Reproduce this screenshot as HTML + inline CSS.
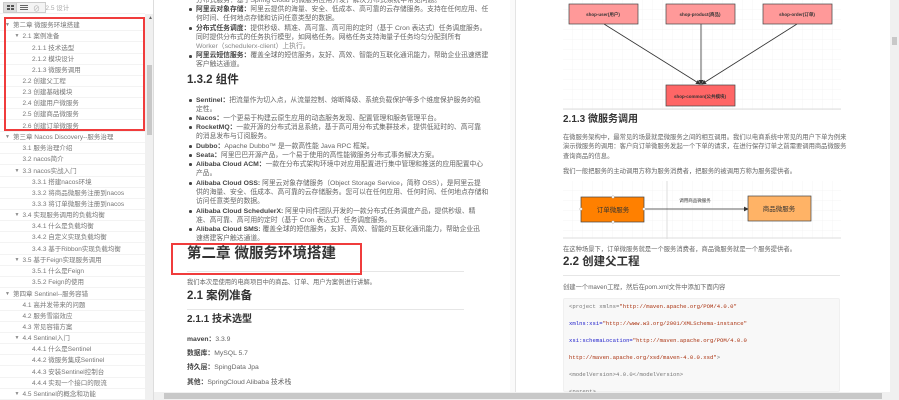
<!DOCTYPE html>
<html><head><meta charset="utf-8"><style>
*{margin:0;padding:0;box-sizing:border-box}
body{width:899px;height:400px;overflow:hidden;background:#fff;font-family:"Liberation Sans","Noto Sans CJK SC",sans-serif;color:#333;position:relative}
.a{position:absolute;white-space:nowrap}
#side{position:absolute;left:0;top:0;width:154px;height:400px;background:#fff;border-right:1px solid #ddd;overflow:hidden}
.si{position:absolute;left:0;width:145px;height:11px;font-size:6.5px;line-height:11px;color:#777;border-bottom:1px solid #f3f3f3;white-space:nowrap}
.t{font-size:5px;color:#888;position:absolute}
.doc{font-size:6.8px;line-height:9px;color:#666}
.b{position:absolute;width:2.5px;height:2.5px;background:#444;border-radius:50%}
h{font-weight:bold;color:#444}
.code{font-family:"Liberation Mono",monospace;font-size:5.6px}
</style></head><body>
<div id="side">
<div class="si" style="top:3px;padding-left:40px;color:#aaa">1.2.5 设计</div>
<div class="a" style="left:3px;top:2px;width:43px;height:11px;border:1px solid #ccc;background:#f4f4f4"></div>
<div class="a" style="left:4px;top:3px;width:13px;height:9px;background:#ddd;border-right:1px solid #ccc"></div>
<div class="a" style="left:7px;top:5px;width:3px;height:2px;background:#555;box-shadow:4px 0 #555,0 3px #555,4px 3px #555"></div>
<div class="a" style="left:20px;top:5px;width:8px;height:1px;background:#666;box-shadow:0 2px #666,0 4px #666"></div>
<div class="a" style="left:33px;top:4px;font-size:7px;color:#aaa">⊘</div>
<div id="rows"></div>
<div class="a" style="left:145px;top:14px;width:9px;height:386px;background:#f0f0f0"></div>
<div class="a" style="left:147px;top:65px;width:5px;height:70px;background:#c8c8c8"></div>
<div class="a" style="left:148px;top:15px;font-size:5px;color:#666">▲</div>
<div class="a" style="left:4px;top:17px;width:141px;height:114px;border:2px solid #f03c3c"></div>
</div>
<script>
var R=[[25,0,"第二章 微服务环境搭建",1],[36,1,"2.1 案例准备",1],[48,2,"2.1.1 技术选型"],[59,2,"2.1.2 模块设计"],[70,2,"2.1.3 微服务调用"],[81,1,"2.2 创建父工程"],[92,1,"2.3 创建基础模块"],[103,1,"2.4 创建用户微服务"],[114,1,"2.5 创建商品微服务"],[126,1,"2.6 创建订单微服务"],[137,0,"第三章 Nacos Discovery--服务治理",1],[148,1,"3.1 服务治理介绍"],[159,1,"3.2 nacos简介"],[171,1,"3.3 nacos实战入门",1],[182,2,"3.3.1 搭建nacos环境"],[193,2,"3.3.2 将商品微服务注册到nacos"],[204,2,"3.3.3 将订单微服务注册到nacos"],[215,1,"3.4 实现服务调用的负载均衡",1],[226,2,"3.4.1 什么是负载均衡"],[237,2,"3.4.2 自定义实现负载均衡"],[249,2,"3.4.3 基于Ribbon实现负载均衡"],[260,1,"3.5 基于Feign实现服务调用",1],[271,2,"3.5.1 什么是Feign"],[282,2,"3.5.2 Feign的使用"],[294,0,"第四章 Sentinel--服务容错",1],[305,1,"4.1 高并发带来的问题"],[316,1,"4.2 服务雪崩效应"],[327,1,"4.3 常见容错方案"],[338,1,"4.4 Sentinel入门",1],[349,2,"4.4.1 什么是Sentinel"],[360,2,"4.4.2 微服务集成Sentinel"],[372,2,"4.4.3 安装Sentinel控制台"],[383,2,"4.4.4 实现一个接口的限流"],[394,1,"4.5 Sentinel的概念和功能",1]];
var h="";R.forEach(function(r){var x=13+r[1]*9.5;h+='<div class="si" style="top:'+(r[0]-5.5)+'px;padding-left:'+x+'px">'+(r[3]?'<span class="t" style="left:'+(x-8)+'px">▼</span>':'')+r[2]+'</div>';});
document.getElementById("rows").innerHTML=h;
</script>
<div class="a" style="left:154px;top:0;width:360px;height:392px;background:#fff;border-right:1px solid #e4e4e4"></div>
<div class="a" style="left:510px;top:0;width:6px;height:392px;background:#fafafa;border-right:1px solid #e4e4e4"></div>
<div class="doc">
<div class="a" style="left:196px;top:-4px">分布式服务：基于Spring Cloud 的微服务应用开发，解决分布式系统中常见问题。</div>
<div class="b" style="left:189px;top:8px"></div>
<div class="a" style="left:196px;top:5px"><h>阿里云对象存储：</h>阿里云提供的海量、安全、低成本、高可靠的云存储服务。支持在任何应用、任</div>
<div class="a" style="left:196px;top:14px">何时间、任何地点存储和访问任意类型的数据。</div>
<div class="b" style="left:189px;top:27px"></div>
<div class="a" style="left:196px;top:24px"><h>分布式任务调度：</h>提供秒级、精准、高可靠、高可用的定时（基于 Cron 表达式）任务调度服务。</div>
<div class="a" style="left:196px;top:33px">同时提供分布式的任务执行模型，如网格任务。网格任务支持海量子任务均匀分配到所有</div>
<div class="a" style="left:196px;top:42px;color:#888">Worker（schedulerx-client）上执行。</div>
<div class="b" style="left:189px;top:55px"></div>
<div class="a" style="left:196px;top:51px"><h>阿里云短信服务：</h>覆盖全球的短信服务，友好、高效、智能的互联化通讯能力，帮助企业迅速搭建</div>
<div class="a" style="left:196px;top:60px">客户触达通道。</div>
<div class="a" style="left:187px;top:76px;font-size:11.5px;font-weight:bold;color:#333">1.3.2 组件</div>
<div class="b" style="left:189px;top:99px"></div>
<div class="a" style="left:196px;top:96px"><h>Sentinel：</h>把流量作为切入点，从流量控制、熔断降级、系统负载保护等多个维度保护服务的稳</div>
<div class="a" style="left:196px;top:105px">定性。</div>
<div class="b" style="left:189px;top:117px"></div>
<div class="a" style="left:196px;top:114px"><h>Nacos：</h>一个更易于构建云原生应用的动态服务发现、配置管理和服务管理平台。</div>
<div class="b" style="left:189px;top:126px"></div>
<div class="a" style="left:196px;top:123px"><h>RocketMQ：</h>一款开源的分布式消息系统，基于高可用分布式集群技术，提供低延时的、高可靠</div>
<div class="a" style="left:196px;top:132px">的消息发布与订阅服务。</div>
<div class="b" style="left:189px;top:145px"></div>
<div class="a" style="left:196px;top:142px"><h>Dubbo：</h>Apache Dubbo™ 是一款高性能 Java RPC 框架。</div>
<div class="b" style="left:189px;top:154px"></div>
<div class="a" style="left:196px;top:151px"><h>Seata：</h>阿里巴巴开源产品，一个易于使用的高性能微服务分布式事务解决方案。</div>
<div class="b" style="left:189px;top:163px"></div>
<div class="a" style="left:196px;top:160px"><h>Alibaba Cloud ACM：</h>一款在分布式架构环境中对应用配置进行集中管理和推送的应用配置中心</div>
<div class="a" style="left:196px;top:169px">产品。</div>
<div class="b" style="left:189px;top:182px"></div>
<div class="a" style="left:196px;top:179px"><h>Alibaba Cloud OSS:</h> 阿里云对象存储服务（Object Storage Service，简称 OSS），是阿里云提</div>
<div class="a" style="left:196px;top:188px">供的海量、安全、低成本、高可靠的云存储服务。您可以在任何应用、任何时间、任何地点存储和</div>
<div class="a" style="left:196px;top:197px">访问任意类型的数据。</div>
<div class="b" style="left:189px;top:210px"></div>
<div class="a" style="left:196px;top:207px"><h>Alibaba Cloud SchedulerX:</h> 阿里中间件团队开发的一款分布式任务调度产品，提供秒级、精</div>
<div class="a" style="left:196px;top:216px">准、高可靠、高可用的定时（基于 Cron 表达式）任务调度服务。</div>
<div class="b" style="left:189px;top:228px"></div>
<div class="a" style="left:196px;top:225px"><h>Alibaba Cloud SMS:</h> 覆盖全球的短信服务，友好、高效、智能的互联化通讯能力，帮助企业迅</div>
<div class="a" style="left:196px;top:234px">速搭建客户触达通道。</div>
<div class="a" style="left:187px;top:271px;width:277px;height:1px;background:#e6e6e6"></div>
<div class="a" style="left:187px;top:250px;font-size:14.5px;font-weight:bold;color:#333">第二章 微服务环境搭建</div>
<div class="a" style="left:171px;top:243px;width:191px;height:32px;border:2.5px solid #f03c3c"></div>
<div class="a" style="left:187px;top:278px;font-size:6.3px">我们本次是使用的电商项目中的商品、订单、用户为案例进行讲解。</div>
<div class="a" style="left:187px;top:292px;font-size:11.5px;font-weight:bold;color:#333">2.1 案例准备</div>
<div class="a" style="left:187px;top:309px;width:277px;height:1px;background:#e6e6e6"></div>
<div class="a" style="left:187px;top:315px;font-size:10px;font-weight:bold;color:#333">2.1.1 技术选型</div>
<div class="a" style="left:187px;top:335px"><h>maven：</h>3.3.9</div>
<div class="a" style="left:187px;top:349px"><h>数据库：</h>MySQL 5.7</div>
<div class="a" style="left:187px;top:363px"><h>持久层：</h>SpingData Jpa</div>
<div class="a" style="left:187px;top:378px"><h>其他：</h>SpringCloud Alibaba 技术栈</div>
</div>
<svg class="a" style="left:563px;top:0" width="278" height="110">
<defs><pattern id="g" width="10" height="10" patternUnits="userSpaceOnUse"><path d="M10 0V10H0" fill="none" stroke="#eee" stroke-width="0.6"/></pattern>
<marker id="m" markerWidth="6" markerHeight="6" refX="5" refY="3" orient="auto"><path d="M0 0L6 3L0 6z" fill="#333"/></marker></defs>
<rect width="278" height="110" fill="url(#g)"/>
<line x1="0" y1="109" x2="278" y2="109" stroke="#ddd"/>
<line x1="41" y1="24" x2="137" y2="84" stroke="#333" stroke-width="0.8" marker-end="url(#m)"/>
<line x1="138" y1="24" x2="138" y2="84" stroke="#333" stroke-width="0.8" marker-end="url(#m)"/>
<line x1="234" y1="24" x2="139" y2="84" stroke="#333" stroke-width="0.8" marker-end="url(#m)"/>
<g font-size="4.5" font-weight="bold" text-anchor="middle" fill="#333" font-family="Liberation Sans,Noto Sans CJK SC,sans-serif">
<rect x="6" y="4" width="69" height="20" fill="#ff9999" stroke="#444" stroke-width="0.7"/><text x="40" y="16">shop-user(用户)</text>
<rect x="103" y="4" width="69" height="20" fill="#ff9999" stroke="#444" stroke-width="0.7"/><text x="137" y="16">shop-product(商品)</text>
<rect x="200" y="4" width="69" height="20" fill="#ff9999" stroke="#444" stroke-width="0.7"/><text x="234" y="16">shop-order(订单)</text>
<rect x="103" y="85" width="69" height="21" fill="#ff6666" stroke="#444" stroke-width="0.7"/><text x="137" y="98">shop-common(公共模块)</text>
</g></svg>
<div class="doc">
<div class="a" style="left:563px;top:115px;font-size:10px;font-weight:bold;color:#333">2.1.3 微服务调用</div>
<div class="a" style="left:563px;top:133px;font-size:6.3px">在微服务架构中，最常见的场景就是微服务之间的相互调用。我们以电商系统中常见的用户下单为例来</div>
<div class="a" style="left:563px;top:142px;font-size:6.3px">演示微服务的调用：客户向订单微服务发起一个下单的请求，在进行保存订单之前需要调用商品微服务</div>
<div class="a" style="left:563px;top:152px;font-size:6.3px">查询商品的信息。</div>
<div class="a" style="left:563px;top:167px;font-size:6.3px">我们一般把服务的主动调用方称为服务消费者，把服务的被调用方称为服务提供者。</div>
</div>
<svg class="a" style="left:563px;top:181px" width="278" height="58">
<rect width="278" height="58" fill="url(#g)"/>
<line x1="104" y1="0" x2="104" y2="58" stroke="#ddd"/>
<line x1="0" y1="57" x2="278" y2="57" stroke="#ddd"/>
<line x1="81" y1="28" x2="185" y2="28" stroke="#333" stroke-width="0.8" marker-end="url(#m)"/>
<g font-size="6.5" text-anchor="middle" fill="#333" font-family="Liberation Sans,Noto Sans CJK SC,sans-serif">
<rect x="18" y="16" width="63" height="25" fill="#ff8000" stroke="#444" stroke-width="0.7"/><text x="50" y="31">订单微服务</text>
<rect x="185" y="15" width="63" height="25" fill="#ffb366" stroke="#444" stroke-width="0.7"/><text x="216" y="30">商品微服务</text>
<text x="132" y="21" font-size="4.5">调用商品微服务</text>
<circle cx="50" cy="16" r="1.3" fill="#fff" stroke="#999" stroke-width="0.4"/><circle cx="50" cy="41" r="1.3" fill="#fff" stroke="#999" stroke-width="0.4"/><circle cx="18" cy="28" r="1.3" fill="#fff" stroke="#999" stroke-width="0.4"/><circle cx="81" cy="28" r="1.3" fill="#fff" stroke="#999" stroke-width="0.4"/>
</g></svg>
<div class="doc">
<div class="a" style="left:563px;top:245px;font-size:6.3px">在这种场景下，订单微服务就是一个服务消费者，商品微服务就是一个服务提供者。</div>
<div class="a" style="left:563px;top:258px;font-size:11.5px;font-weight:bold;color:#333">2.2 创建父工程</div>
<div class="a" style="left:563px;top:275px;width:277px;height:1px;background:#e6e6e6"></div>
<div class="a" style="left:563px;top:283px;font-size:6.3px">创建一个maven工程，然后在pom.xml文件中添加下面内容</div>
</div>
<div class="a code" style="left:563px;top:298px;width:277px;height:94px;background:#f8f8f8;border:1px solid #f0f0f0;border-radius:2px"></div>
<div class="code" style="color:#333">
<div class="a" style="left:569px;top:303px"><span style="color:#777">&lt;project xmlns=</span><span style="color:#a31">"http://maven.apache.org/POM/4.0.0"</span></div>
<div class="a" style="left:569px;top:320px"><span style="color:#22c">xmlns:xsi=</span><span style="color:#a31">"http://www.w3.org/2001/XMLSchema-instance"</span></div>
<div class="a" style="left:569px;top:337px"><span style="color:#22c">xsi:schemaLocation=</span><span style="color:#a31">"http://maven.apache.org/POM/4.0.0</span></div>
<div class="a" style="left:569px;top:354px;color:#a31">http://maven.apache.org/xsd/maven-4.0.0.xsd"<span style="color:#777">&gt;</span></div>
<div class="a" style="left:569px;top:371px;color:#777">&lt;modelVersion&gt;4.0.0&lt;/modelVersion&gt;</div>
<div class="a" style="left:569px;top:388px;color:#777">&lt;parent&gt;</div>
</div>
<div class="a" style="left:890px;top:0;width:9px;height:392px;background:#f0f0f0"></div>
<div class="a" style="left:892px;top:37px;width:5px;height:8px;background:#c8c8c8"></div>
<div class="a" style="left:154px;top:392px;width:745px;height:8px;background:#f0f0f0"></div>
<div class="a" style="left:164px;top:393px;width:718px;height:6px;background:#c8c8c8"></div>
</body></html>
